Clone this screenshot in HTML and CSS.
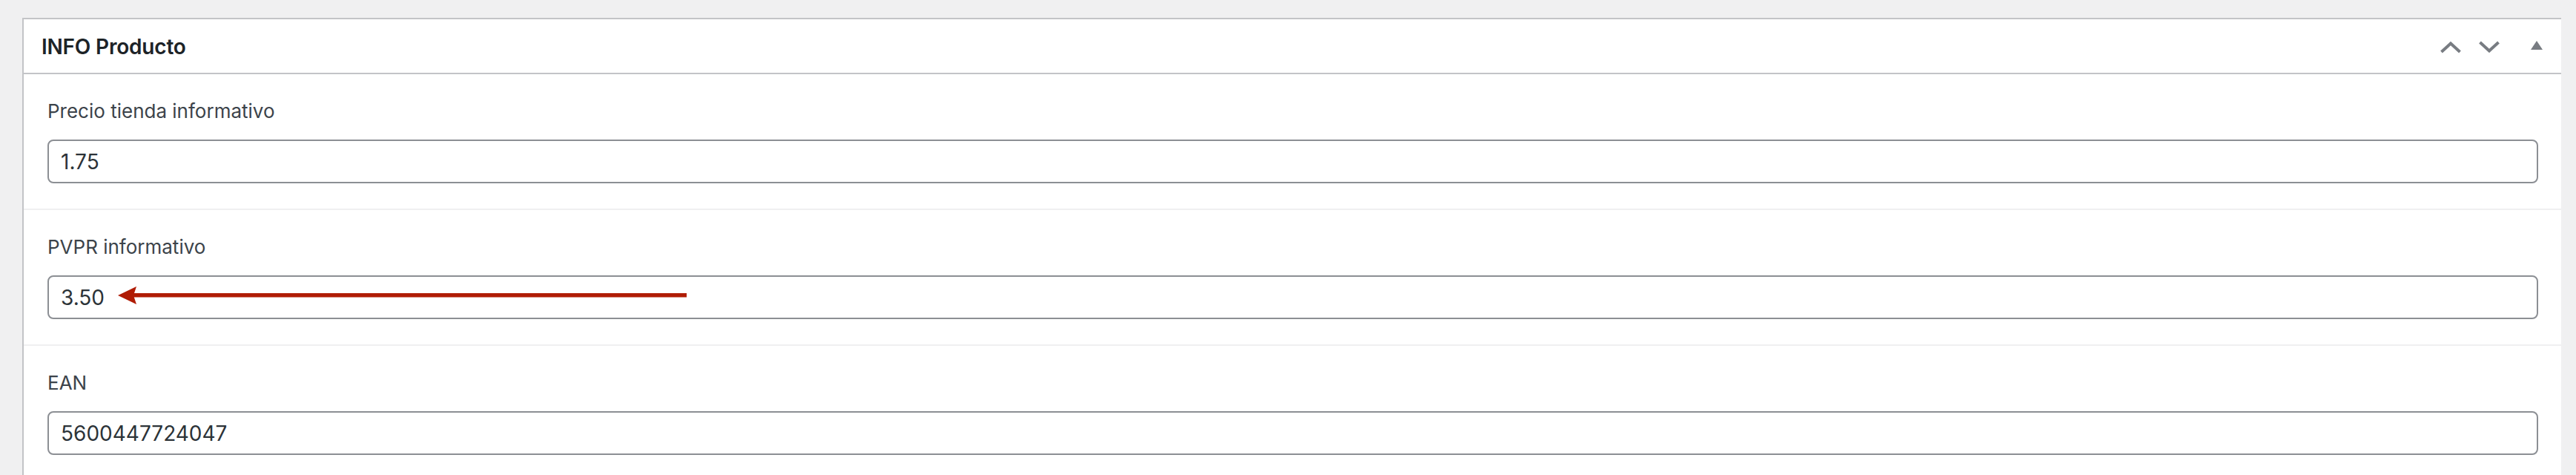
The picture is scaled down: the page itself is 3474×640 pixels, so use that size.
FILE: index.html
```html
<!DOCTYPE html>
<html lang="es">
<head>
<meta charset="utf-8">
<title>INFO Producto</title>
<link rel="stylesheet" href="styles.css">
</head>
<body>
<div class="postbox">
  <div class="postbox-header">
    <h2 class="postbox-title">INFO Producto</h2>
    <div class="handle-actions">
      <button class="handle-btn chev" aria-label="Subir">
        <svg width="28" height="16" viewBox="0 0 28 16"><polyline points="1.5,14 14,2.5 26.5,14" fill="none" stroke="#787c82" stroke-width="4"/></svg>
      </button>
      <button class="handle-btn chev chev-down" aria-label="Bajar">
        <svg width="28" height="16" viewBox="0 0 28 16"><polyline points="1.5,2 14,13.5 26.5,2" fill="none" stroke="#787c82" stroke-width="4"/></svg>
      </button>
      <button class="handle-btn toggle" aria-label="Alternar panel">
        <svg width="16" height="12" viewBox="0 0 16 12"><polygon points="0,12 8,0 16,12" fill="#787c82"/></svg>
      </button>
    </div>
  </div>
  <div class="postbox-inside">
    <div class="field">
      <label class="field-label">Precio tienda informativo</label>
      <div class="field-input">
        <input class="text-input" type="text" value="1.75">
      </div>
    </div>
    <div class="field">
      <label class="field-label">PVPR informativo</label>
      <div class="field-input">
        <input class="text-input" type="text" value="3.50">
        <svg class="annotation-arrow" width="767" height="24" viewBox="0 0 767 24">
          <polygon points="0,12 25,0 21,12 25,24" fill="#b01c05"/>
          <rect x="20" y="9" width="747" height="5.5" fill="#b01c05"/>
        </svg>
      </div>
    </div>
    <div class="field">
      <label class="field-label">EAN</label>
      <div class="field-input">
        <input class="text-input" type="text" value="5600447724047">
      </div>
    </div>
  </div>
</div>
</body>
</html>
```

FILE: styles.css
```css
html, body {
  margin: 0;
  padding: 0;
}

body {
  background: #f0f0f1;
  font-family: Inter, "Noto Sans", "Liberation Sans", sans-serif;
  color: #3c434a;
  height: 640px;
  overflow: hidden;
}

.postbox {
  margin: 24px 20px 0 30px;
  background: #fff;
  border-top: 2px solid #c3c4c7;
  border-left: 2px solid #c3c4c7;
}

.postbox-header {
  display: flex;
  align-items: center;
  justify-content: space-between;
  height: 72px;
  border-bottom: 2px solid #c3c4c7;
  padding: 0 25px 0 24px;
}

.postbox-title {
  margin: 0;
  font-size: 28px;
  font-weight: 600;
  line-height: 72px;
  padding-top: 1px;
  color: #1d2327;
  letter-spacing: -0.2px;
}

.handle-actions {
  display: flex;
  align-items: center;
}

.handle-btn {
  display: flex;
  align-items: center;
  justify-content: center;
  padding: 0;
  margin: 0;
  border: 0;
  background: none;
}

.chev {
  margin-top: 4px;
}

.chev-down {
  margin-left: 24px;
  margin-top: 2px;
}

.toggle {
  margin-left: 42px;
  margin-bottom: 2px;
}

.field {
  padding: 32px 31px 34px 32px;
}

.field + .field {
  border-top: 2px solid #f0f0f1;
}

.field-label {
  display: block;
  font-size: 26px;
  line-height: 36px;
  font-weight: 400;
  color: #3c434a;
  margin-bottom: 20px;
}

.field-input {
  position: relative;
}

.text-input {
  display: block;
  box-sizing: border-box;
  width: 100%;
  height: 59px;
  margin: 0;
  padding: 0 16px;
  border: 2px solid #8c8f94;
  border-radius: 8px;
  background: #fff;
  font-family: Inter, "Noto Sans", "Liberation Sans", sans-serif;
  font-size: 28px;
  color: #2c3338;
  outline: none;
}

.annotation-arrow {
  position: absolute;
  left: 95px;
  top: 15px;
}
```
